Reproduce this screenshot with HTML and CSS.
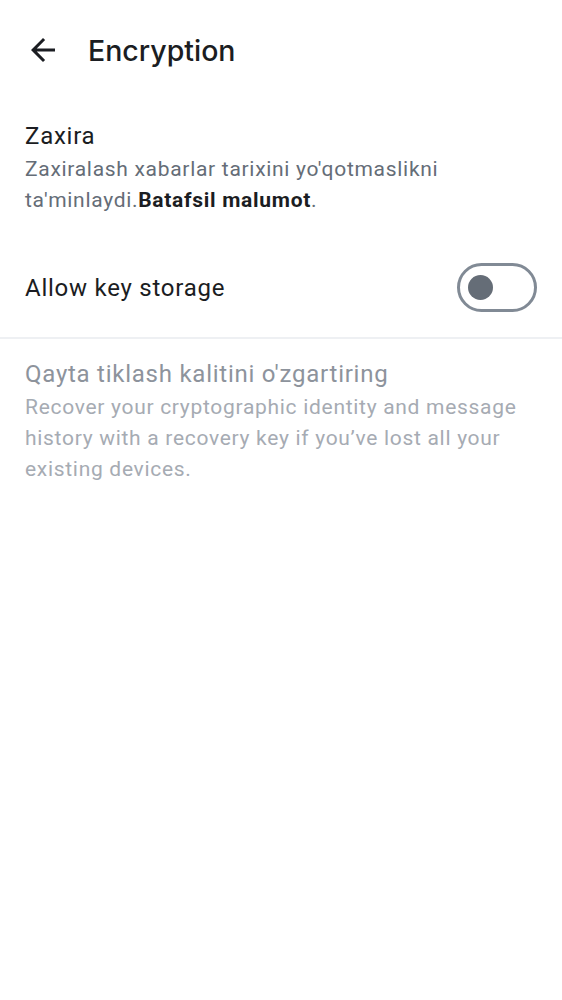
FILE: index.html
```html
<!DOCTYPE html>
<html lang="uz">
<head>
<meta charset="utf-8">
<title>Encryption</title>
<link rel="stylesheet" href="styles.css">
</head>
<body>
<div class="screen">
  <header class="topbar">
    <button class="back" aria-label="Back">
      <svg viewBox="0 0 24 24" width="36" height="36"><path d="M20 11H7.83l5.59-5.59L12 4l-8 8 8 8 1.41-1.41L7.83 13H20v-2z" fill="#1b1d22"/></svg>
    </button>
    <h1 class="title">Encryption</h1>
  </header>

  <section class="item">
    <div class="item-title">Zaxira</div>
    <div class="item-desc">Zaxiralash xabarlar tarixini yo'qotmaslikni ta'minlaydi.<b>Batafsil malumot</b>.</div>
  </section>

  <div class="row">
    <div class="row-label">Allow key storage</div>
    <div class="toggle"><span class="knob"></span></div>
  </div>

  <div class="divider"></div>

  <section class="item disabled">
    <div class="item-title">Qayta tiklash kalitini o'zgartiring</div>
    <div class="item-desc">Recover your cryptographic identity and message history with a recovery key if you’ve lost all your existing devices.</div>
  </section>
</div>
</body>
</html>
```

FILE: styles.css
```css
html, body {
  margin: 0;
  padding: 0;
  background: #ffffff;
}
body {
  font-family: Roboto, "Noto Sans", sans-serif;
  color: #1b1d22;
}
.screen {
  width: 562px;
}
.topbar {
  display: flex;
  align-items: center;
  height: 100px;
  padding-left: 25px;
}
.back {
  border: 0;
  background: none;
  padding: 0;
  width: 36px;
  height: 36px;
  display: flex;
}
.title {
  margin: 0 0 0 27px;
  font-family: Inter, sans-serif;
  font-weight: 500;
  font-size: 28.5px;
  letter-spacing: 0;
  color: #1b1d22;
}
.item {
  padding: 22px 25px 22px 25px;
}
.item.disabled {
  padding-top: 21px;
}
.item-title {
  font-size: 24px;
  line-height: 28px;
  letter-spacing: 0.75px;
  margin-bottom: 4px;
  color: #1b1d22;
}
.item-desc {
  font-size: 21px;
  line-height: 31px;
  letter-spacing: 0.7px;
  color: #656d77;
}
.item-desc b {
  font-weight: 700;
  color: #1b1d22;
}
.row {
  display: flex;
  align-items: center;
  justify-content: space-between;
  padding: 25px 25px;
}
.row-label {
  font-size: 24px;
  letter-spacing: 0.75px;
  color: #1b1d22;
}
.toggle {
  box-sizing: border-box;
  width: 80px;
  height: 49px;
  border: 3px solid #818a95;
  border-radius: 25px;
  display: flex;
  align-items: center;
  padding-left: 8px;
}
.knob {
  width: 25px;
  height: 25px;
  border-radius: 50%;
  background: #656d77;
}
.divider {
  height: 2px;
  background: #eef0f3;
}
.disabled .item-title {
  color: #8d939c;
}
.disabled .item-desc {
  color: #a6abb3;
}
```
